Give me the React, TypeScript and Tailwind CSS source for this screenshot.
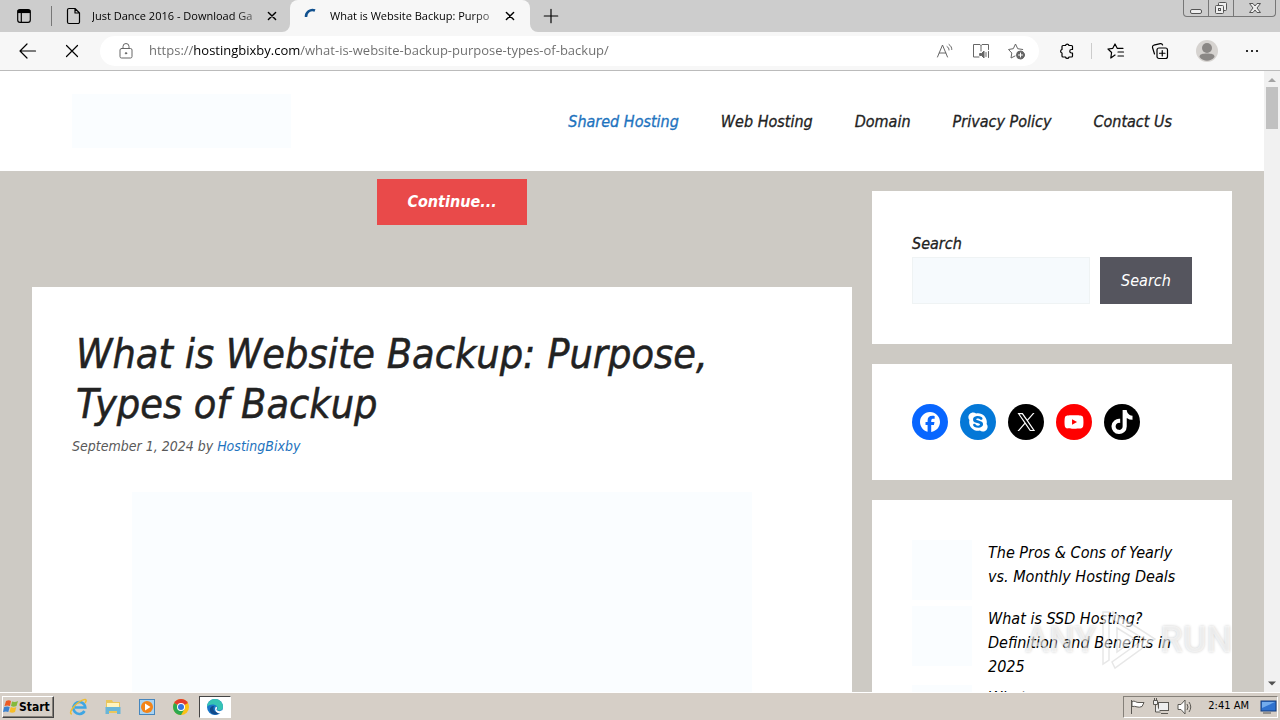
import { ReactNode } from 'react';
import { FaFacebook, FaSkype, FaTiktok, FaYoutube } from 'react-icons/fa6';

const navLinks = ['Shared Hosting', 'Web Hosting', 'Domain', 'Privacy Policy', 'Contact Us'];

const recentPosts = [
  'The Pros & Cons of Yearly vs. Monthly Hosting Deals',
  'What is SSD Hosting? Definition and Benefits in 2025',
  'What',
];

const XLogo = () => (
  <svg viewBox="0 0 24 24" fill="currentColor" className="size-6">
    <path d="M13.982 10.622 20.54 3h-1.554l-5.693 6.618L8.745 3H3.5l6.876 10.007L3.5 21h1.554l6.012-6.989L15.868 21h5.245l-7.131-10.378Zm-2.128 2.474-.697-.997-5.543-7.93H8l4.474 6.4.697.996 5.815 8.318h-2.387l-4.745-6.787Z" />
  </svg>
);

const socials = [
  { name: 'Facebook', color: 'bg-[#0866ff]', icon: <FaFacebook className="size-5" /> },
  { name: 'Skype', color: 'bg-[#0478d7]', icon: <FaSkype className="size-[22px]" /> },
  { name: 'X', color: 'bg-black', icon: <XLogo /> },
  { name: 'YouTube', color: 'bg-[#ff0000]', icon: <FaYoutube className="size-5" /> },
  { name: 'TikTok', color: 'bg-black', icon: <FaTiktok className="size-6" /> },
];

const Icon = ({ children, className = 'size-5' }: { children: ReactNode; className?: string }) => (
  <svg viewBox="0 0 20 20" fill="none" stroke="currentColor" strokeWidth={1} strokeLinecap="round" strokeLinejoin="round" className={className}>
    {children}
  </svg>
);

const CloseIcon = () => (
  <Icon className="size-4">
    <path d="M5.5 5.5l9 9m0-9l-9 9" strokeWidth={1.8} />
  </Icon>
);

const TabBar = () => (
  <div className="flex h-8 bg-[#cdcdcd]">
    <button aria-label="Tab actions" className="flex w-12 items-center justify-center">
      <Icon className="size-[18px]">
        <rect x="3" y="3" width="14" height="14" rx="2.5" strokeWidth={1.3} />
        <path d="M3 5h14" strokeWidth={3.5} strokeLinecap="butt" />
        <path d="M7 6v11" strokeWidth={1.3} />
      </Icon>
    </button>
    <div className="my-1.5 ml-[3px] w-px bg-[#777]" />
    <div className="flex w-[238px] items-center pl-3 pr-2.5">
      <Icon className="size-5 shrink-0">
        <path d="M5 2.500h6l4.500 4.500v9a1.500 1.500 0 0 1-1.500 1.500h-9a1.500 1.500 0 0 1-1.500-1.500v-12A1.500 1.500 0 0 1 5 2.500zM11 2.500V7h4.500" strokeWidth={1.2} />
      </Icon>
      <button className="ml-2 flex-1 whitespace-nowrap text-left text-[11px] [mask-image:linear-gradient(to_right,black_85%,#0006)]">
        Just Dance 2016 - Download Ga
      </button>
      <button aria-label="Close Just Dance tab" className="ml-1.5"><CloseIcon /></button>
    </div>
    <div className="relative flex w-60 items-center rounded-t-lg bg-[#f7f7f7] pl-3 pr-3">
      <svg viewBox="0 0 8 8" className="absolute -left-2 bottom-0 size-2"><path d="M8 0v8H0a8 8 0 0 0 8-8z" fill="#f7f7f7" /></svg>
      <svg viewBox="0 0 8 8" className="absolute -right-2 bottom-0 size-2"><path d="M0 0v8h8a8 8 0 0 1-8-8z" fill="#f7f7f7" /></svg>
      <svg viewBox="0 0 20 20" className="size-5 shrink-0">
        <path d="M4 11a6.500 6.500 0 0 1 9-6.500" fill="none" stroke="#11518f" strokeWidth="2.500" />
      </svg>
      <button className="ml-2 flex-1 whitespace-nowrap text-left text-[11px] [mask-image:linear-gradient(to_right,black_85%,#0006)]">
        What is Website Backup: Purpo
      </button>
      <button aria-label="Close Website Backup tab" className="ml-1.5"><CloseIcon /></button>
    </div>
    <button aria-label="New tab" className="ml-3 flex items-center">
      <Icon className="size-[18px]"><path d="M10 2.500v15M2.500 10h15" strokeWidth={1.300} /></Icon>
    </button>
    <div className="ml-auto mr-1 flex h-[17px] rounded-b border border-t-0 border-[#777] text-[#555]">
      <button aria-label="Minimize" className="flex w-[25px] items-center justify-center border-r border-[#777]">
        <svg viewBox="0 0 14 14" className="size-3.5" fill="#eee" stroke="currentColor"><rect x="1.500" y="8.500" width="11" height="4" rx="1.500" /></svg>
      </button>
      <button aria-label="Restore" className="flex w-[25px] items-center justify-center border-r border-[#777]">
        <svg viewBox="0 0 14 14" className="size-3.5" fill="#eee" stroke="currentColor">
          <rect x="4.500" y="1.500" width="8" height="8" rx="1" />
          <rect x="1.500" y="4.500" width="8" height="8" rx="1" />
          <rect x="4.500" y="7.500" width="2" height="2" />
        </svg>
      </button>
      <button aria-label="Close window" className="flex w-[41px] items-center justify-center">
        <svg viewBox="0 0 14 14" className="size-3.5" fill="#eee" stroke="currentColor" strokeLinejoin="round">
          <path d="M1.500 2.500h3.500l2 2.500 2-2.500h3.500l-3.500 4.500 3.500 4.500h-3.500l-2-2.500-2 2.500H1.500l3.500-4.500z" />
        </svg>
      </button>
    </div>
  </div>
);

const Toolbar = () => (
  <div className="flex h-[39px] items-center border-b border-[#bbb] bg-[#f7f7f7] pl-[18px] pr-[18px]">
    <button aria-label="Back"><Icon><path d="M17.500 10h-15M9 3L2 10l7 7" strokeWidth={1.200} /></Icon></button>
    <button aria-label="Stop" className="ml-6"><Icon><path d="M4.500 4.500l11 11m0-11l-11 11" strokeWidth={1.200} /></Icon></button>
    <div className="ml-[18px] flex h-[30px] flex-1 items-center rounded-full bg-white pl-4 pr-3 text-[#666]">
      <Icon>
        <rect x="4" y="7.500" width="12" height="9.500" rx="1.500" />
        <path d="M7 7.500V5.500a3 3 0 0 1 6 0v2" />
        <circle cx="10" cy="12.300" r=".7" fill="currentColor" />
      </Icon>
      <input
        aria-label="Address"
        readOnly
        value="https://hostingbixby.com/what-is-website-backup-purpose-types-of-backup/"
        className="ml-[13px] min-w-0 flex-1 bg-[linear-gradient(to_right,#6b6b6b_44px,#000_44px,#000_151px,#6b6b6b_151px)] bg-clip-text text-[13px] text-transparent outline-none"
      />
      <div className="flex gap-4">
        <button aria-label="Read aloud">
          <Icon><path d="M2.500 16L7.500 4l5 12M4.300 12h6.500M12 5.500c1.500 1 2 2 2 3.500M14 3.500c2 1.500 2.800 3 2.800 5" /></Icon>
        </button>
        <button aria-label="Immersive reader">
          <Icon>
            <path d="M8 16H2.500V3.500H9l1 1 1-1h6.500v5M10 4.500V10" />
            <path d="M9 12.500h1.500L13 10v7l-2.500-2.500H9z" fill="currentColor" />
            <path d="M15 11.500v4M17.500 10.500v6" />
          </Icon>
        </button>
        <button aria-label="Add to favorites">
          <Icon>
            <path d="M8 15l-4 2 .8-5L1.500 8.500l4.800-.8L8.500 3l2.200 4.700 5 .8" />
            <circle cx="13.500" cy="14" r="4" fill="currentColor" />
            <path d="M13.500 12v4m-2-2h4" stroke="white" />
          </Icon>
        </button>
      </div>
    </div>
    <button aria-label="Extensions" className="ml-[18px]">
      <Icon>
        <path d="M6 4.500h2.500a1.800 1.800 0 0 1 3.500 0h2.500a1 1 0 0 1 1 1v3h-1a1.700 1.700 0 0 0 0 3.500h1v3a1 1 0 0 1-1 1H12a1.800 1.800 0 0 1-3.500 0H6a1 1 0 0 1-1-1V12a1.800 1.800 0 0 1 0-3.500v-3a1 1 0 0 1 1-1z" strokeWidth={1.200} />
      </Icon>
    </button>
    <div className="ml-3.5 h-4 w-px bg-[#ccc]" />
    <button aria-label="Favorites" className="ml-3.5">
      <Icon><path d="M9 14l-4.200 3 .8-5.500L2 8l4.800-.7L9 3l2.200 4.300H17M12 11h5.500M12 15h5.500" strokeWidth={1.200} /></Icon>
    </button>
    <button aria-label="Collections" className="ml-6">
      <Icon>
        <rect x="7" y="7" width="10.500" height="10.500" rx="2" strokeWidth={1.200} />
        <path d="M4.500 13L2.500 6.500a2 2 0 0 1 1.300-2.300l6.500-1.500a2 2 0 0 1 2.300 1.300M12.250 9.500v5.500m-2.750-2.750h5.500" strokeWidth={1.200} />
      </Icon>
    </button>
    <button aria-label="Profile" className="ml-[26px]">
      <svg viewBox="0 0 22 22" className="size-[22px]">
        <circle cx="11" cy="11" r="11" fill="#d6d3d0" />
        <circle cx="11" cy="8" r="5" fill="#8a8785" />
        <path d="M3.500 17c0-3 3-3.500 7.500-3.500s7.500.5 7.500 3.500c-4 5-11 5-15 0z" fill="#8a8785" />
      </svg>
    </button>
    <button aria-label="Settings and more" className="ml-6">
      <Icon><path d="M5 10h.01M10 10h.01M15 10h.01" strokeWidth={2.200} /></Icon>
    </button>
  </div>
);

const SiteHeader = () => (
  <header className="flex h-[100px] items-center justify-between bg-white px-[72px]">
    <a href="#" aria-label="Home" className="h-[54px] w-[219px] bg-[#fafdff]" />
    <nav className="flex gap-[42px] pr-5 pt-0.5 text-base [-webkit-text-stroke:0.3px]">
      {navLinks.map((link, i) => (
        <a key={link} href="#" className={i === 0 ? 'text-[#1e73be]' : 'text-[#222]'}>{link}</a>
      ))}
    </nav>
  </header>
);

const Article = () => (
  <article className="mr-5 mt-[62px] h-[600px] bg-white p-10">
    <h1 className="pl-1 pt-0.5 text-[41px] leading-[50px] text-[#222] [-webkit-text-stroke:0.5px]">
      What is Website Backup: Purpose, Types of Backup
    </h1>
    <p className="mt-1.5 text-sm leading-[22px] text-[#595959]">
      September 1, 2024 by <a href="#" className="text-[#1e73be]">HostingBixby</a>
    </p>
    <div className="mx-auto mt-[35px] h-[400px] max-w-[620px] bg-[#fafdff]" />
  </article>
);

const Sidebar = () => (
  <aside className="mt-5 flex w-[360px] shrink-0 flex-col gap-5 text-[#222]">
    <form className="bg-white p-10" onSubmit={(e) => e.preventDefault()}>
      <label htmlFor="search" className="block text-base leading-[26px] [-webkit-text-stroke:0.3px]">Search</label>
      <div className="flex h-[47px] gap-2.5">
        <input id="search" type="search" className="min-w-0 flex-1 border border-[#eff3f4] bg-[#f6fafd]" />
        <button className="w-[92px] bg-[#55555e] text-base text-white">Search</button>
      </div>
    </form>
    <div className="flex gap-3 bg-white p-10">
      {socials.map((s) => (
        <a key={s.name} href="#" aria-label={s.name} className={`flex size-9 items-center justify-center rounded-full text-white ${s.color}`}>
          {s.icon}
        </a>
      ))}
    </div>
    <ul className="flex flex-col gap-1.5 bg-white p-10 text-base leading-6 text-black">
      {recentPosts.map((post) => (
        <li key={post} className="flex gap-4">
          <div className="size-[60px] shrink-0 bg-[#fafdff]" />
          <a href="#" className="pt-px">{post}</a>
        </li>
      ))}
    </ul>
  </aside>
);

const Scrollbar = () => (
  <div className="flex w-4 shrink-0 flex-col items-center bg-[#f1f1f1]">
    <svg viewBox="0 0 16 16" className="size-4"><path d="M4 11l4-4 4 4z" fill="#a3a3a3" /></svg>
    <div className="h-[42px] w-3 bg-[#c1c1c1]" />
    <svg viewBox="0 0 16 16" className="mt-auto size-4"><path d="M4 5.500l4 4 4-4z" fill="#505050" /></svg>
  </div>
);

const Watermark = () => (
  <div className="pointer-events-none absolute bottom-6 right-12 flex h-14 items-center gap-1 font-['Liberation_Sans_Narrow','Roboto',sans-serif] text-[36px] font-medium not-italic leading-none text-white/60 [text-shadow:0_0_3px_#0003]">
    <span>ANY</span>
    <svg viewBox="0 0 56 60" className="h-[60px] w-14" fill="#ffffff90" stroke="#00000018" strokeWidth="1.500">
      <path d="M3 2h6v48l-6 4zM13 2l42 27-40 29-3-6 32-23-31-19z" />
      <path d="M17 18l18 11-18 13z" />
    </svg>
    <span>RUN</span>
  </div>
);

const Taskbar = () => (
  <footer className="flex h-7 items-center border-t border-white bg-[#d6cfc7] pl-0.5 pr-0.5 font-['DejaVu_Sans_Condensed','DejaVu_Sans',sans-serif] text-[11px]">
    <button className="flex h-[22px] w-[52px] items-center border border-b-[#444] border-l-white border-r-[#444] border-t-white text-xs font-bold shadow-[inset_-1px_-1px_#858079]">
      <svg viewBox="0 0 16 16" className="size-4 shrink-0">
        <path d="M3 2q3-1.500 5 0L7 7Q4.500 6 1.500 7z" fill="#ed5c24" />
        <path d="M9 2.500q3 1 6-.5l-1.500 5q-3 1.500-5.500 0z" fill="#85b93c" />
        <path d="M1.200 8q3-1 5.500 0l-1.400 5Q3 12 0 13z" fill="#3c82cf" />
        <path d="M7.800 8q3 1.500 5.500 0L12 13q-3 1.500-5.500 0z" fill="#f7bd28" />
      </svg>
      Start
    </button>
    <div className="ml-[15px] flex items-center gap-3.5">
      <button aria-label="Internet Explorer">
        <svg viewBox="0 0 20 20" className="size-5" fill="none">
          <path d="M15.500 14a6 6 0 1 1 .8-3.500H6" stroke="#3fa6e3" strokeWidth="2.600" />
          <path d="M3 17c-4 0 1-8 7-12s9-3 6 1" stroke="#efbd31" strokeWidth="1.500" />
        </svg>
      </button>
      <button aria-label="File Explorer">
        <svg viewBox="0 0 20 20" className="size-5">
          <path d="M3 3h6l1 2h7v11H3z" fill="#e9c65c" />
          <path d="M4 6h12v5H4z" fill="#fff4bd" />
          <path d="M2.500 10h15v7H14v-3H6v3H2.500z" fill="#68b6d8" />
        </svg>
      </button>
      <button aria-label="Media Player">
        <svg viewBox="0 0 20 20" className="size-5">
          <rect x="2.500" y="2.500" width="15" height="15" fill="#a9d3f2" stroke="#4686bd" />
          <circle cx="10" cy="10" r="6" fill="#f38418" />
          <path d="M8 6.500v7l5.500-3.500z" fill="#fff" />
        </svg>
      </button>
      <button aria-label="Chrome">
        <svg viewBox="0 0 20 20" className="size-5">
          <circle cx="10" cy="10" r="8" fill="#fbc116" />
          <path d="M10 10L3.100 6a8 8 0 0 1 13.800 0z" fill="#e33b2e" />
          <path d="M10 10L3.100 6A8 8 0 0 0 10 18l3.500-6z" fill="#2da94f" />
          <circle cx="10" cy="10" r="4" fill="#fff" />
          <circle cx="10" cy="10" r="3" fill="#3474e0" />
        </svg>
      </button>
    </div>
    <button aria-label="Edge" className="ml-2 flex h-[22px] w-8 items-center justify-center border border-b-white border-l-[#444] border-r-white border-t-[#444] bg-white">
      <svg viewBox="0 0 20 20" className="size-5">
        <circle cx="10" cy="10" r="8" fill="#1976c9" />
        <path d="M2 10a8 8 0 0 1 16 0c0 3-3 4-6 3 1-1 1-4-2-5S3 8 2 10z" fill="#36c4b4" />
        <path d="M9 9c-2 4 1 7 6 6-3 4-9 3-10-1-.5-3 1-5 4-5z" fill="#114a8b" />
        <path d="M11 9.500c2 1 .5 2.500.5 3.500 1.500 1.500 4 1.500 6 0V16c-6 1.500-9-3-6.500-6.500z" fill="#fff" />
      </svg>
    </button>
    <div className="ml-auto flex h-[22px] items-center gap-1.5 border border-b-white border-l-[#858079] border-r-white border-t-[#858079] pl-1 text-[#5b5853]">
      <svg viewBox="0 0 18 18" className="size-[18px]" fill="#fff" stroke="currentColor">
        <path d="M3.500 2v14M4 3.500c3-1.500 4 1.500 7 1h5l-2 4c-4 2-6-1-10 0z" />
      </svg>
      <svg viewBox="0 0 18 18" className="size-[18px]" fill="#eee" stroke="currentColor">
        <rect x="6.500" y="4.500" width="10" height="8" />
        <path d="M9 15.500h7M3.500 6v8h5M1.500 2.500h4v4h-4zM2.500 0v2M4.500 0v2" />
      </svg>
      <svg viewBox="0 0 18 18" className="size-[18px]" fill="#fff" stroke="currentColor">
        <path d="M2 6.500h3L9 2v14l-4-4.500H2z" />
        <path d="M11 6q2 3 0 6M13 4q3.500 5 0 10" fill="none" />
      </svg>
      <span className="ml-2 text-black">2:41 AM</span>
      <svg viewBox="0 0 18 18" className="ml-1 size-[18px]">
        <rect x="2" y="3" width="15" height="10" fill="#2f72cf" stroke="#153c7c" />
        <path d="M3 4h13L3 10z" fill="#73aced" />
        <path d="M4 15h8" stroke="#555" />
      </svg>
    </div>
  </footer>
);

export default function App() {
  return (
    <div className="flex h-screen flex-col overflow-hidden font-['Open_Sans',sans-serif] text-black">
      <TabBar />
      <Toolbar />
      <div className="relative flex min-h-0 flex-1 overflow-hidden font-['DejaVu_Sans_Condensed','DejaVu_Sans',sans-serif] italic">
        <div className="min-w-0 flex-1 bg-[#cdcac4]">
          <SiteHeader />
          <div className="flex px-8">
            <main className="min-w-0 flex-1 pt-2">
              <button className="mx-auto block h-[46px] w-[150px] bg-[#e94a4a] text-base font-bold italic text-white">Continue...</button>
              <Article />
            </main>
            <Sidebar />
          </div>
        </div>
        <Scrollbar />
        <Watermark />
      </div>
      <Taskbar />
    </div>
  );
}
